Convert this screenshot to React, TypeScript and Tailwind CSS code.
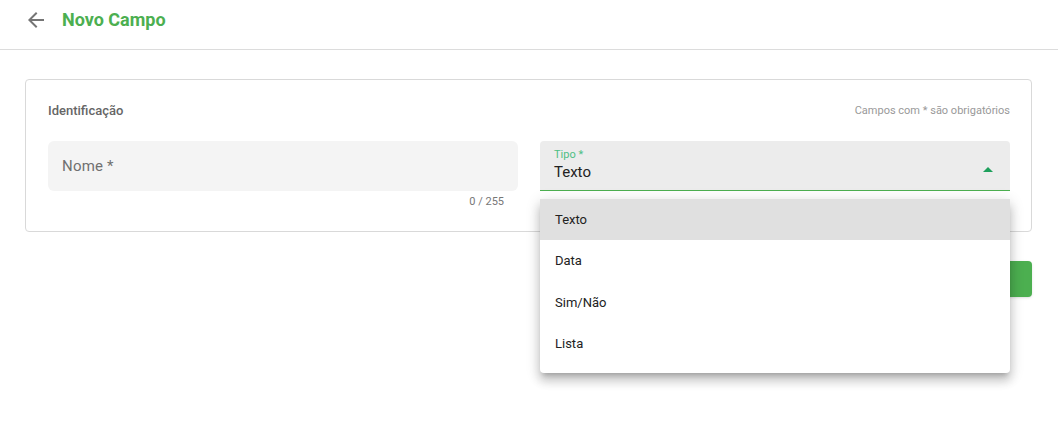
const items = ["Texto", "Data", "Sim/Não", "Lista"];

function BackIcon() {
  return (
    <svg viewBox="0 0 24 24" className="w-6 h-6 fill-[#757575]">
      <path d="M20 11H7.83l5.59-5.59L12 4l-8 8 8 8 1.41-1.41L7.83 13H20v-2z" />
    </svg>
  );
}

function Header() {
  return (
    <header className="h-[50px] border-b border-[#dcdcdc] flex items-center pl-6 pb-[9px] gap-[14px]">
      <BackIcon />
      <h1 className="text-[18px] font-bold text-[#4caf50] leading-none">Novo Campo</h1>
    </header>
  );
}

function NomeField() {
  return (
    <div>
      <div className="h-[50px] rounded-[6px] bg-[#f4f4f4] flex items-center px-[14px]">
        <span className="text-[15px] text-[#707070] tracking-[0.2px]">Nome *</span>
      </div>
      <div className="text-right pr-[14px] pt-[4px] text-[11px] leading-[14px] text-[#777]">0 / 255</div>
    </div>
  );
}

function TipoSelect() {
  return (
    <div className="relative">
      <div className="h-[50px] rounded-t-[4px] bg-[#ececec] border-b border-[#4caf50] flex items-center px-[14px]">
        <div className="flex-1 flex flex-col">
          <span className="text-[11px] leading-[12px] text-[#4cbf84]">Tipo *</span>
          <span className="text-[15px] leading-[20px] text-[#222] mt-[1px]">Texto</span>
        </div>
        <svg viewBox="0 0 10 5" className="w-[10px] h-[5px] fill-[#1ea05c] mr-[3px] mt-[8px]">
          <path d="M0 5L5 0L10 5Z" />
        </svg>
      </div>
      <ul className="absolute left-0 right-0 top-[58px] z-20 bg-white rounded-[4px] pb-2 shadow-[0_5px_5px_-3px_rgba(0,0,0,0.2),0_8px_10px_1px_rgba(0,0,0,0.14),0_3px_14px_2px_rgba(0,0,0,0.12)]">
        {items.map((it, i) => (
          <li
            key={it}
            className={
              "h-[41.4px] flex items-center px-[15px] text-[13px] text-[#222] " +
              (i === 0 ? "bg-[#e0e0e0]" : "")
            }
          >
            {it}
          </li>
        ))}
      </ul>
    </div>
  );
}

export default function App() {
  return (
    <div className="min-h-[436px] bg-white font-['Roboto',sans-serif]">
      <Header />
      <main className="pl-[25px] pr-[26px] pt-[29px]">
        <section className="border border-[#d9d9d9] rounded-[4px] pl-[22px] pr-[21px] pt-[22px] pb-[22px]">
          <div className="flex items-center justify-between h-[18px]">
            <span className="text-[13px] font-medium text-[#666]">Identificação</span>
            <span className="text-[11px] text-[#999]">Campos com * são obrigatórios</span>
          </div>
          <div className="grid grid-cols-2 gap-[22px] mt-[21px]">
            <NomeField />
            <TipoSelect />
          </div>
        </section>
        <div className="flex justify-end mt-[29px]">
          <button className="h-[36px] w-[110px] rounded-[4px] bg-[#4caf50] text-white text-[14px] font-medium shadow">
            Salvar
          </button>
        </div>
      </main>
    </div>
  );
}
